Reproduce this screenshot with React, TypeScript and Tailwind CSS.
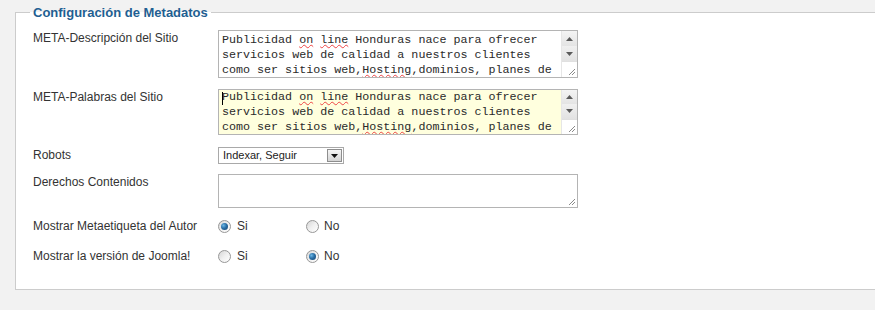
import React from "react";

const mono = { fontFamily: '"Liberation Mono", "Courier New", monospace' } as const;

function Squiggle({ children }: { children: React.ReactNode }) {
  return (
    <span className="underline decoration-wavy decoration-[#e44] decoration-[1px] underline-offset-[1px]">
      {children}
    </span>
  );
}

function ScrollBar() {
  return (
    <div className="flex w-[16px] flex-col border-l border-[#e6e6e6]">
      <div className="flex flex-1 items-center justify-center bg-gradient-to-b from-[#f4f4f4] to-[#e4e4e4]">
        <svg width="7" height="4" viewBox="0 0 7 4">
          <path d="M0 4 L3.5 0 L7 4 Z" fill="#5a5a5a" />
        </svg>
      </div>
      <div className="flex flex-1 items-center justify-center bg-gradient-to-b from-[#f0f0f0] to-[#e2e2e2]">
        <svg width="7" height="4" viewBox="0 0 7 4">
          <path d="M0 0 L7 0 L3.5 4 Z" fill="#5a5a5a" />
        </svg>
      </div>
      <div className="relative flex flex-1 items-end justify-end border-t border-[#e0e0e0] bg-white">
        <svg width="10" height="10" viewBox="0 0 10 10" className="mb-[1px] mr-[1px]">
          <path d="M9 3 L3 9 M9 6 L6 9" stroke="#8a8a8a" strokeWidth="1" />
        </svg>
      </div>
    </div>
  );
}

function MetaText({ yellow, caret }: { yellow?: boolean; caret?: boolean }) {
  return (
    <div
      className={`flex h-full w-[360px] border border-[#b4b4b4] ${yellow ? "bg-[#ffffde]" : "bg-white"}`}
    >
      <div
        className={`relative flex-1 overflow-hidden whitespace-pre pl-[3px] text-[11.7px] leading-[15px] text-[#2a2a2a] ${yellow ? "pt-0" : "pt-[2px]"}`}
        style={mono}
      >
        {caret && <span className="absolute left-[3px] top-[2px] h-[13px] w-[1px] bg-black" />}
        <div>
          Publicidad <Squiggle>on</Squiggle> <Squiggle>line</Squiggle> Honduras nace para ofrecer
        </div>
        <div>servicios web de calidad a nuestros clientes</div>
        <div>
          como ser sitios web,<Squiggle>Hosting</Squiggle>,dominios, planes de
        </div>
      </div>
      <ScrollBar />
    </div>
  );
}

function Radio({ checked }: { checked?: boolean }) {
  return (
    <span className="flex h-[13px] w-[13px] items-center justify-center rounded-full border border-[#979797] bg-gradient-to-br from-[#d6d6d6] via-[#f0f0f0] to-white">
      {checked && (
        <span className="h-[7px] w-[7px] rounded-full bg-[radial-gradient(circle_at_35%_35%,#6cb7e6_0%,#2a6fa6_45%,#16416b_100%)]" />
      )}
    </span>
  );
}

function RadioPair({ value }: { value: "si" | "no" }) {
  return (
    <div className="flex items-center">
      <div className="flex w-[88px] items-center">
        <Radio checked={value === "si"} />
        <span className="ml-[6px]">Si</span>
      </div>
      <div className="flex items-center">
        <Radio checked={value === "no"} />
        <span className="ml-[5px]">No</span>
      </div>
    </div>
  );
}

function Row({
  label,
  mt,
  h,
  children,
}: {
  label: string;
  mt: string;
  h: string;
  children: React.ReactNode;
}) {
  return (
    <div className={`flex ${mt}`}>
      <div className="w-[185px] leading-[16px]">{label}</div>
      <div className={`flex ${h} items-center`}>{children}</div>
    </div>
  );
}

export default function App() {
  return (
    <div
      className="h-[310px] w-[875px] overflow-hidden bg-[#f2f2f2] pt-[5px] text-[12px] text-[#333]"
      style={{ fontFamily: '"Liberation Sans", Arial, sans-serif' }}
    >
      <fieldset className="ml-[15px] w-[900px] min-w-0 border border-[#cccccc] bg-white pb-[25px] pl-[17px]">
        <legend className="ml-[-3px] px-[3px] text-[13px] font-bold leading-[15px] text-[#1f5f92]">
          Configuración de Metadatos
        </legend>
        <Row label="META-Descripción del Sitio" mt="mt-[10px]" h="h-[48px]">
          <MetaText />
        </Row>
        <Row label="META-Palabras del Sitio" mt="mt-[11px]" h="h-[46px]">
          <MetaText yellow caret />
        </Row>
        <Row label="Robots" mt="mt-[12px]" h="h-[17px]">
          <div className="flex h-[17px] w-[126px] items-center justify-between border border-[#a9a9a9] bg-white pl-[4px] pr-[1px] text-[11px] text-[#222]">
            <span>Indexar, Seguir</span>
            <span className="flex h-[13px] w-[15px] items-center justify-center border border-[#8e8e8e] bg-gradient-to-b from-[#f5f5f5] to-[#d4d4d4]">
              <svg width="7" height="4" viewBox="0 0 7 4">
                <path d="M0 0 L7 0 L3.5 4 Z" fill="#111" />
              </svg>
            </span>
          </div>
        </Row>
        <Row label="Derechos Contenidos" mt="mt-[10px]" h="h-[34px]">
          <div className="relative h-[34px] w-[360px] border border-[#b4b4b4] bg-white">
            <svg width="10" height="10" viewBox="0 0 10 10" className="absolute bottom-[1px] right-[1px]">
              <path d="M9 3 L3 9 M9 6 L6 9" stroke="#8a8a8a" strokeWidth="1" />
            </svg>
          </div>
        </Row>
        <Row label="Mostrar Metaetiqueta del Autor" mt="mt-[10px]" h="h-[16px]">
          <RadioPair value="si" />
        </Row>
        <Row label="Mostrar la versión de Joomla!" mt="mt-[14px]" h="h-[16px]">
          <RadioPair value="no" />
        </Row>
      </fieldset>
    </div>
  );
}
